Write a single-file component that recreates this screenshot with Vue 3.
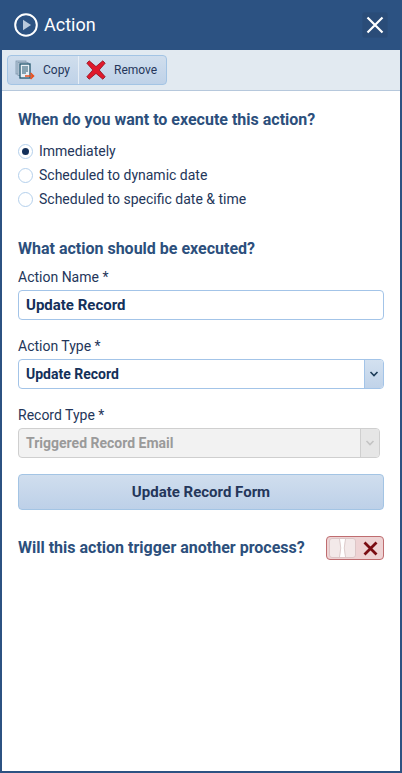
<script setup>
const options = [
  { label: 'Immediately', checked: true },
  { label: 'Scheduled to dynamic date', checked: false },
  { label: 'Scheduled to specific date & time', checked: false }
]
</script>

<template>
  <div class="panel">
    <header class="head">
      <div class="title">
        <svg class="play" width="26" height="26" viewBox="0 0 26 26">
          <circle cx="13" cy="13" r="10.8" fill="none" stroke="#fff" stroke-width="2" />
          <path d="M10 7.8 L18 13 L10 18.2 Z" fill="#b9c9dc" />
        </svg>
        <span>Action</span>
      </div>
      <button class="close">
        <svg width="18" height="18" viewBox="0 0 18 18">
          <path d="M1.5 1.5 L16.5 16.5 M16.5 1.5 L1.5 16.5" stroke="#fff" stroke-width="2.2" fill="none" />
        </svg>
      </button>
    </header>

    <div class="toolbar">
      <div class="btn-group">
        <button class="tool tool-copy">
          <svg width="20" height="20" viewBox="0 0 20 20">
            <rect x="1" y="1" width="10" height="13" fill="#b3c6d8" stroke="#7f97ac" stroke-width="0.8" />
            <rect x="3" y="2.5" width="10" height="13" fill="#cbd9e6" stroke="#7f97ac" stroke-width="0.8" />
            <rect x="5" y="4" width="10" height="14" fill="#e8eff5" stroke="#24566e" stroke-width="1.3" />
            <path d="M7 7h6M7 9h6M7 11h6M7 13h4" stroke="#24566e" stroke-width="1" />
            <path d="M10 16h8M15.5 13 L18.5 16 L15.5 19" stroke="#e8501f" stroke-width="1.6" fill="none" />
          </svg>
          <span>Copy</span>
        </button>
        <button class="tool tool-remove">
          <svg width="20" height="20" viewBox="0 0 20 20">
            <path d="M0.8 3.2 L3.2 0.8 L10 6.6 L16.8 0.8 L19.2 3.2 L13.2 10 L19.2 16.8 L16.8 19.2 L10 13.4 L3.2 19.2 L0.8 16.8 L6.8 10 Z" fill="#e0192c" stroke="#8e1420" stroke-width="0.8" />
          </svg>
          <span>Remove</span>
        </button>
      </div>
    </div>

    <main class="body">
      <h2 class="heading">When do you want to execute this action?</h2>
      <div class="radios">
        <label v-for="o in options" :key="o.label" class="radio">
          <span class="dot" :class="{ on: o.checked }"></span>
          <span>{{ o.label }}</span>
        </label>
      </div>

      <h2 class="heading second">What action should be executed?</h2>

      <div class="label first">Action Name *</div>
      <div class="input">Update Record</div>

      <div class="label">Action Type *</div>
      <div class="select">
        <span class="select-text">Update Record</span>
        <span class="arrow">
          <svg width="10" height="6" viewBox="0 0 10 6"><path d="M1.5 1 L5 4.5 L8.5 1" fill="none" stroke="#1d3c58" stroke-width="1.6" /></svg>
        </span>
      </div>

      <div class="label">Record Type *</div>
      <div class="select disabled">
        <span class="select-text">Triggered Record Email</span>
        <span class="arrow">
          <svg width="10" height="6" viewBox="0 0 10 6"><path d="M1.5 1 L5 4.5 L8.5 1" fill="none" stroke="#c4c4c4" stroke-width="1.6" /></svg>
        </span>
      </div>

      <button class="form-btn">Update Record Form</button>

      <div class="trigger">
        <h2 class="heading">Will this action trigger another process?</h2>
        <div class="toggle">
          <span class="knob">
            <svg width="25" height="18" viewBox="0 0 25 18">
              <path d="M9.5 0 Q12 9 9.5 18 L15.5 18 Q13 9 15.5 0 Z" fill="#fff" />
              <path d="M9.5 0 Q12 9 9.5 18 M15.5 0 Q13 9 15.5 18" fill="none" stroke="#dccccc" stroke-width="1" />
            </svg>
          </span>
          <svg class="toggle-x" width="15" height="15" viewBox="0 0 15 15">
            <path d="M1.5 1.5 L13.5 13.5 M13.5 1.5 L1.5 13.5" stroke="#7a0c12" stroke-width="2.8" fill="none" />
          </svg>
        </div>
      </div>
    </main>
  </div>
</template>

<style>
html, body { margin: 0; padding: 0; background: #fff; }
</style>

<style scoped>
.panel {
  box-sizing: border-box;
  width: 402px;
  height: 773px;
  display: flex;
  flex-direction: column;
  background: #fff;
  border: 2px solid #2c5282;
  border-top: 0;
  font-family: Roboto, "Liberation Sans", sans-serif;
  color: #24365a;
  overflow: hidden;
}
.head {
  height: 50px;
  flex: none;
  margin: 0 -2px;
  padding: 0 14px 0 13px;
  background: #2c5282;
  display: flex;
  align-items: center;
  justify-content: space-between;
}
.title {
  display: flex;
  align-items: center;
  gap: 5px;
  color: #fff;
  font-size: 18px;
  line-height: 24px;
}
.play { display: block; }
.close {
  width: 26px;
  height: 26px;
  padding: 0;
  border: 1px solid #2a4e7c;
  border-radius: 3px;
  background: #2a4c78;
  display: flex;
  align-items: center;
  justify-content: center;
}
.toolbar {
  height: 41px;
  flex: none;
  box-sizing: border-box;
  background: #e2eaf1;
  border-bottom: 1px solid #b6c8dc;
  padding: 5px 0 0 5px;
}
.btn-group {
  display: inline-flex;
  height: 30px;
  box-sizing: border-box;
  border: 1px solid #a3c4e4;
  border-radius: 4px;
  background: linear-gradient(#d0deed, #bfd2e8);
}
.tool {
  display: flex;
  align-items: center;
  height: 28px;
  padding: 0;
  border: 0;
  background: none;
  color: #24365a;
  font-family: inherit;
  font-size: 12px;
}
.tool-copy { width: 71px; padding-left: 7px; gap: 8px; border-right: 1px solid #e6eef6; }
.tool-remove { width: 87px; padding-left: 7px; gap: 8px; }
.body {
  flex: 1;
  padding: 19px 16px 0;
}
.heading {
  margin: 0;
  font-size: 16px;
  line-height: 20px;
  font-weight: 700;
  color: #2c4f7c;
}
.heading.second { margin-top: 30px; }
.radios {
  margin-top: 11px;
  display: flex;
  flex-direction: column;
  gap: 4px;
}
.radio {
  display: flex;
  align-items: center;
  gap: 6px;
  height: 20px;
  font-size: 14px;
  line-height: 20px;
}
.dot {
  box-sizing: border-box;
  width: 15px;
  height: 15px;
  border-radius: 50%;
  border: 1px solid #b4d0ec;
  background: #fff;
  display: flex;
  align-items: center;
  justify-content: center;
}
.dot.on::after {
  content: "";
  width: 7px;
  height: 7px;
  border-radius: 50%;
  background: #14305a;
}
.label {
  margin-top: 16px;
  font-size: 14px;
  line-height: 20px;
  height: 20px;
  margin-bottom: 3px;
}
.label.first { margin-top: 8px; }
.input, .select {
  box-sizing: border-box;
  height: 30px;
  width: 366px;
  border: 1px solid #a3c4e8;
  border-radius: 4px;
  font-size: 14px;
  font-weight: 700;
  color: #14305a;
  display: flex;
  align-items: center;
}
.input { padding-left: 7px; font-size: 15px; }
.select { overflow: hidden; }
.select-text { flex: 1; padding-left: 7px; }
.arrow {
  box-sizing: border-box;
  width: 19px;
  height: 100%;
  flex: none;
  border-left: 1px solid #a3c4e8;
  background: linear-gradient(#d3e1f0, #c0d3e9);
  display: flex;
  align-items: center;
  justify-content: center;
}
.select.disabled {
  width: 362px;
  border-color: #cfcfcf;
  background: #f2f2f2;
  color: #9a9a9a;
}
.select.disabled .arrow {
  border-left-color: #cfcfcf;
  background: #e6e6e6;
}
.form-btn {
  display: block;
  box-sizing: border-box;
  margin-top: 16px;
  width: 366px;
  height: 36px;
  padding: 0;
  border: 1px solid #a3c4e4;
  border-radius: 4px;
  background: linear-gradient(#d0deee, #bdd0e8);
  color: #24365a;
  font-family: inherit;
  font-size: 15px;
  font-weight: 700;
}
.trigger {
  margin-top: 25px;
  display: flex;
  align-items: center;
  justify-content: space-between;
  height: 26px;
}
.toggle {
  box-sizing: border-box;
  width: 58px;
  height: 24px;
  border: 1px solid #bf6d70;
  border-radius: 4px;
  background: #eed3d4;
  padding: 2px;
  display: flex;
  align-items: center;
  justify-content: space-between;
}
.knob {
  box-sizing: border-box;
  width: 27px;
  height: 20px;
  border: 1px solid #dcc6c7;
  border-radius: 3px;
  background: #f3e9e9;
  display: flex;
  align-items: center;
  justify-content: center;
  overflow: hidden;
}
.toggle-x { margin-right: 3px; }
</style>
